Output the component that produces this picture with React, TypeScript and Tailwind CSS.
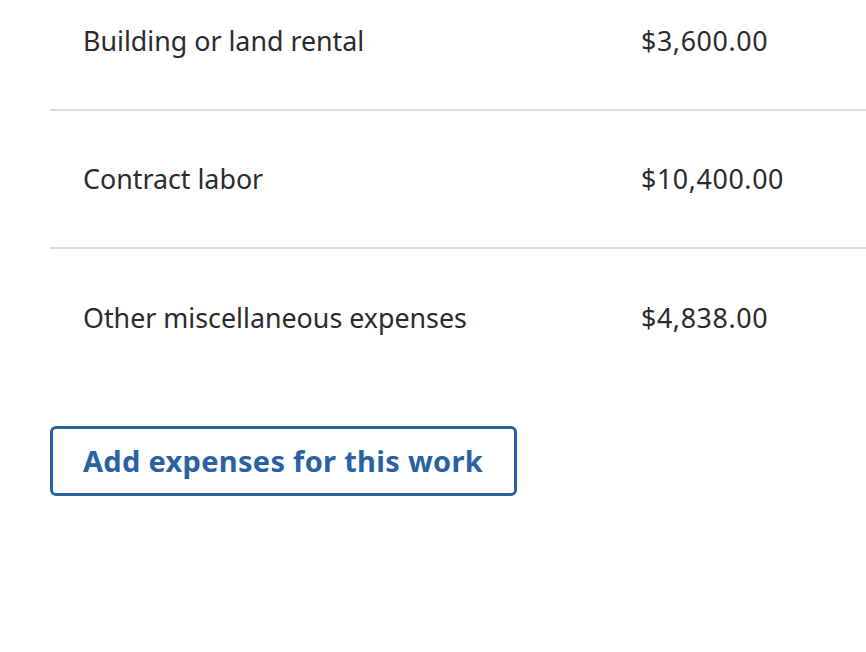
export default function App() {
  const rows = [
    { label: "Building or land rental", amount: "$3,600.00" },
    { label: "Contract labor", amount: "$10,400.00" },
    { label: "Other miscellaneous expenses", amount: "$4,838.00" },
  ];
  return (
    <div className="w-[866px] h-[652px] overflow-hidden bg-white text-[#2b2b2b]" style={{ fontFamily: "'Noto Sans', sans-serif" }}>
      <div className="pl-[50px] mt-[-27px]">
        {rows.map((r, i) => (
          <div
            key={r.label}
            className={`grid grid-cols-[558px_1fr] items-center h-[138px] pl-[33px] text-[26.8px] ${i < rows.length - 1 ? "border-b-2 border-[#d9dde1]" : ""}`}
          >
            <span>{r.label}</span>
            <span className="tracking-[0.6px]">{r.amount}</span>
          </div>
        ))}
        <button className="mt-[39px] w-[467px] h-[70px] border-[3px] border-[#2a62a0] rounded-[6px] text-left pl-[30px] text-[29px] tracking-[0.3px] font-bold text-[#2a62a0]">
          Add expenses for this work
        </button>
      </div>
    </div>
  );
}
